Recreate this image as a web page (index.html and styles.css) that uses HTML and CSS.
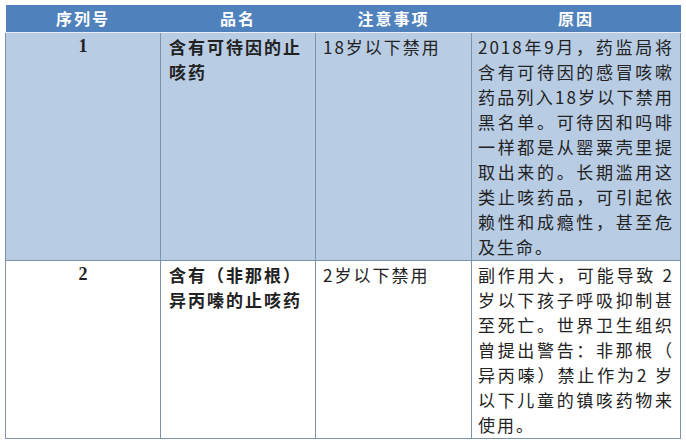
FILE: index.html
```html
<!DOCTYPE html>
<html lang="zh">
<head>
<meta charset="utf-8">
<title>止咳药</title>
<link rel="stylesheet" href="styles.css">
</head>
<body>
<table class="drug-table">
  <colgroup>
    <col class="c1"><col class="c2"><col class="c3"><col class="c4">
  </colgroup>
  <thead>
    <tr>
      <th>序列号</th>
      <th>品名</th>
      <th>注意事项</th>
      <th>原因</th>
    </tr>
  </thead>
  <tbody>
    <tr class="row-blue">
      <td class="num">1</td>
      <td class="name">含有可待因的止咳药</td>
      <td class="note">18岁以下禁用</td>
      <td class="reason">2018年9月，药监局将含有可待因的感冒咳嗽药品列入18岁以下禁用黑名单。可待因和吗啡一样都是从罂粟壳里提取出来的。长期滥用这类止咳药品，可引起依赖性和成瘾性，甚至危及生命。</td>
    </tr>
    <tr class="row-white">
      <td class="num">2</td>
      <td class="name">含有（非那根）异丙嗪的止咳药</td>
      <td class="note">2岁以下禁用</td>
      <td class="reason">副作用大，可能导致 2 岁以下孩子呼吸抑制甚至死亡。世界卫生组织曾提出警告：非那根（异丙嗪）禁止作为2 岁以下儿童的镇咳药物来使用。</td>
    </tr>
  </tbody>
</table>
</body>
</html>
```
FILE: styles.css
```css
html, body {
  margin: 0;
  padding: 0;
  background: #ffffff;
}
body {
  padding: 5px 0 0 5px;
  font-family: "Noto Sans CJK SC", "Noto Sans", sans-serif;
  color: #222;
}
.drug-table {
  border-collapse: collapse;
  table-layout: fixed;
  width: 675px;
}
.c1 { width: 155px; }
.c2 { width: 155px; }
.c3 { width: 156px; }
.c4 { width: 209px; }

.drug-table th {
  background: #4f81bd;
  color: #fff;
  font-weight: 700;
  font-size: 16px;
  letter-spacing: 2px;
  height: 27px;
  padding: 0;
  line-height: 27px;
  text-align: center;
  border-bottom: 1px solid #e8eef6;
}
.drug-table td {
  vertical-align: top;
  font-size: 17px;
  line-height: 25px;
  letter-spacing: 2px;
  padding: 1px 8px 1px 8px;
  border: 1px solid #7d93ab;
  border-top: none;
}
.row-blue td { background: #b8cce4; }
.row-white td { background: #ffffff; }

.num {
  text-align: center;
  font-family: "Liberation Serif", "Noto Sans CJK SC", serif;
  font-weight: 700;
  font-size: 18px !important;
  letter-spacing: 0 !important;
}
.name {
  font-weight: 700;
}
.note {
  padding-left: 7px !important;
}
.reason {
  text-align: justify;
  line-break: anywhere;
  padding-left: 6px !important;
  padding-right: 6px !important;
}
```
